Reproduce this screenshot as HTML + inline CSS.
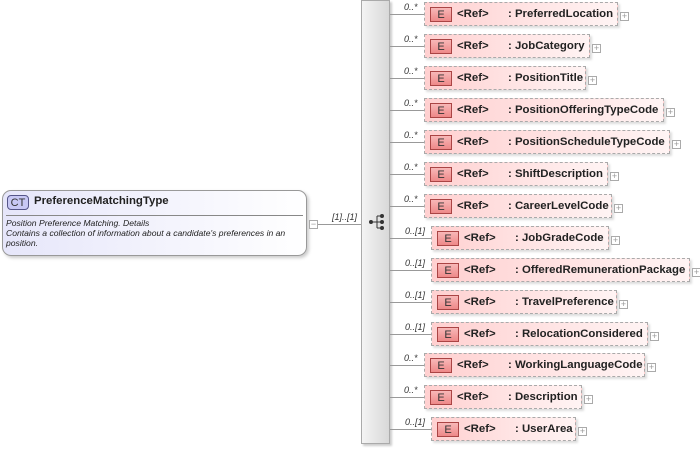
<!DOCTYPE html>
<html><head><meta charset="utf-8"><style>
body{margin:0;width:700px;height:449px;background:#fff;position:relative;overflow:hidden;font-family:"Liberation Sans",sans-serif}
.a{position:absolute}
.bar{left:361px;top:0;width:29px;height:444px;background:linear-gradient(90deg,#f4f4f4,#d8d8d8);border:1px solid #aaa;box-sizing:border-box;box-shadow:2px 2px 2px #ccc}
.box{position:absolute;height:24px;border:1px dashed #aaa;box-sizing:border-box;background:linear-gradient(90deg,#ffd0d0,#fff4f4);box-shadow:2px 2px 2px #ddd;font-size:11.4px;font-weight:bold;color:#222}
.e{position:absolute;left:5px;top:4px;width:22px;height:15px;border:1px solid #a44;background:linear-gradient(#f8b8b8,#e88);font-size:11px;font-weight:normal;text-align:center;line-height:15px;color:#333;box-sizing:border-box}
.ref{position:absolute;left:32px;top:5px}
.nm{position:absolute;left:83px;top:5px}
.ln{position:absolute;height:1px;background:#999}
.lb{position:absolute;font-size:9px;font-style:italic;color:#333}
.pl{position:absolute;width:9px;height:9px;border:1px solid #aaa;box-sizing:border-box;background:#fff;font-size:9px;line-height:6px;text-align:center;color:#999}
</style></head><body>
<div class="a" style="left:2px;top:190px;width:305px;height:66px;border:1px solid #999;border-radius:9px;box-sizing:border-box;background:linear-gradient(90deg,#e6e6fa,#fff);box-shadow:2px 2px 3px #ccc"></div>
<div class="a" style="left:7px;top:195px;width:22px;height:15px;border:1px solid #558;border-radius:4px;background:#c8c8f4;font-size:11px;text-align:center;line-height:15px;color:#333;box-sizing:border-box">CT</div>
<div class="a" style="left:34px;top:195px;font-size:11.4px;font-weight:bold;color:#222">PreferenceMatchingType</div>
<div class="a" style="left:6px;top:215px;width:297px;height:1px;background:#888"></div>
<div class="a" style="left:6px;top:218px;width:300px;font-size:8.6px;font-style:italic;color:#222;line-height:10px">Position Preference Matching. Details<br>Contains a collection of information about a candidate's preferences in an position.</div>
<div class="pl" style="left:309px;top:220px">−</div>
<div class="ln" style="left:318px;top:224px;width:43px"></div>
<div class="lb" style="left:332px;top:212px">[1]..[1]</div>
<div class="a bar"></div>
<svg class="a" style="left:368px;top:213px" width="18" height="18" viewBox="0 0 18 18"><circle cx="3" cy="9" r="2" fill="#333"/><path d="M5 9H9M9 3V15M9 3H13M9 9H13M9 15H13" stroke="#333" fill="none"/><circle cx="14" cy="3" r="2" fill="#333"/><circle cx="14" cy="9" r="2" fill="#333"/><circle cx="14" cy="15" r="2" fill="#333"/></svg>
<div id="rows"></div>
<script>
var d=[["0..*",424,618,"PreferredLocation"],["0..*",424,590,"JobCategory"],["0..*",424,586,"PositionTitle"],["0..*",424,664,"PositionOfferingTypeCode"],["0..*",424,670,"PositionScheduleTypeCode"],["0..*",424,608,"ShiftDescription"],["0..*",424,612,"CareerLevelCode"],["0..[1]",431,609,"JobGradeCode"],["0..[1]",431,690,"OfferedRemunerationPackage"],["0..[1]",431,617,"TravelPreference"],["0..[1]",431,648,"RelocationConsidered"],["0..*",424,645,"WorkingLanguageCode"],["0..*",424,582,"Description"],["0..[1]",431,576,"UserArea"]];
var h="";d.forEach(function(r,i){var c=Math.round(14+31.95*i);
h+='<div class="ln" style="left:390px;top:'+c+'px;width:'+(r[1]-390)+'px"></div>';
h+='<div class="lb" style="left:'+(r[1]-20-(r[0].length>4?6:0))+'px;top:'+(c-12)+'px">'+r[0]+'</div>';
h+='<div class="box" style="left:'+r[1]+'px;top:'+(c-12)+'px;width:'+(r[2]-r[1])+'px"><div class="e">E</div><div class="ref">&lt;Ref&gt;</div><div class="nm">: '+r[3]+'</div></div>';
h+='<div class="pl" style="left:'+(r[2]+2)+'px;top:'+(c-2)+'px">+</div>';});
document.getElementById("rows").innerHTML=h;
</script>
</body></html>
